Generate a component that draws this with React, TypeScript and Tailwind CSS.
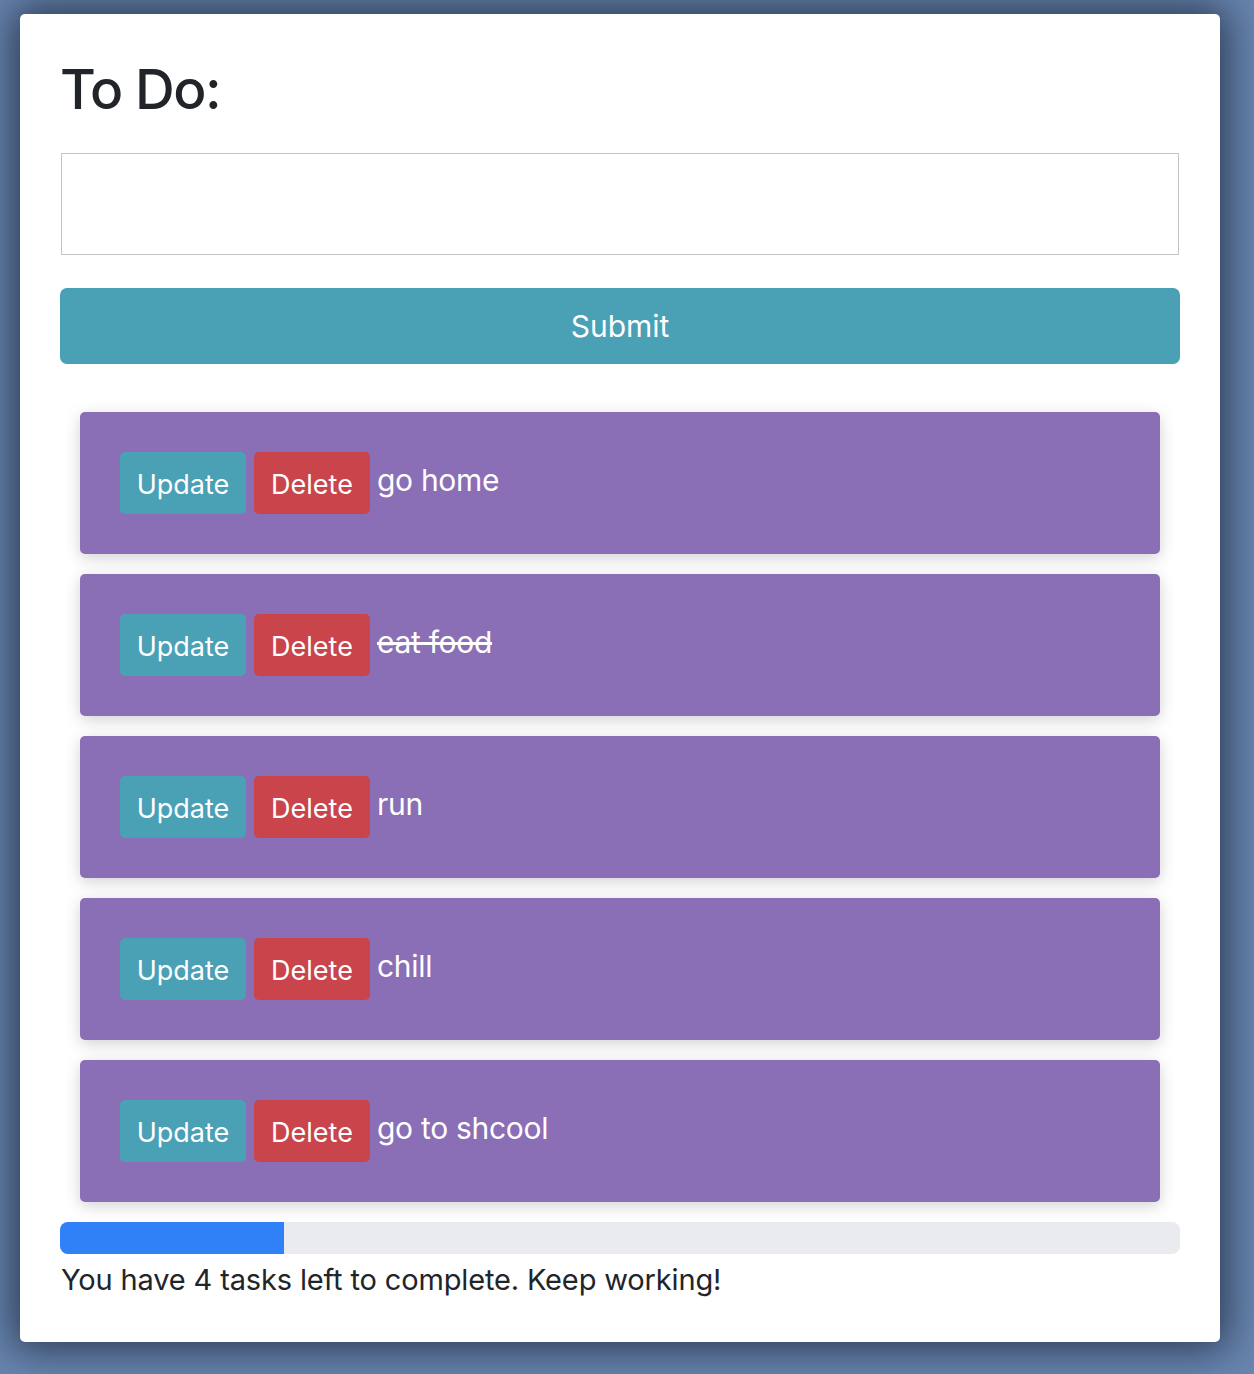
import React from "react";

const items = [
  { text: "go home", done: false },
  { text: "eat food", done: true },
  { text: "run", done: false },
  { text: "chill", done: false },
  { text: "go to shcool", done: false },
];

export default function App() {
  return (
    <div
      className="min-h-screen w-full bg-[#6886b0] pt-[14px] pb-[32px] px-[20px]"
      style={{ fontFamily: "Inter, 'Noto Sans', sans-serif" }}
    >
      <div className="w-[1200px] bg-white rounded-[5px] shadow-[0_0_40px_8px_rgba(25,35,55,0.75)] px-[40px] pt-[48px] pb-[42px] text-[#212529]">
        <h1 className="text-[55px] leading-none font-medium tracking-[-1.5px] ml-[0px]">To Do:</h1>
        <input
          className="mt-[36px] block w-[1118px] ml-[1px] h-[102px] border border-[#c4c4c4] outline-none"
          type="text"
        />
        <button className="mt-[33px] w-full h-[76px] rounded-[7px] bg-[#4aa0b5] text-white text-[30px] leading-none">
          Submit
        </button>
        <div className="mt-[48px] px-[20px] flex flex-col gap-[20px]">
          {items.map((it) => (
            <div
              key={it.text}
              className="bg-[#8a6eb6] rounded-[5px] p-[40px] shadow-[0_4px_16px_rgba(0,0,0,0.18)] flex items-start"
            >
              <button className="h-[62px] w-[126px] rounded-[5px] bg-[#4aa0b5] text-white text-[27px] leading-none pt-[2px]">
                Update
              </button>
              <button className="ml-[8px] h-[62px] w-[116px] rounded-[5px] bg-[#ca444b] text-white text-[27px] leading-none pt-[2px]">
                Delete
              </button>
              <span
                className={
                  "ml-[7px] mt-[8px] text-white text-[30px] leading-[40px] tracking-[-0.3px] " +
                  (it.done ? "line-through" : "")
                }
              >
                {it.text}
              </span>
            </div>
          ))}
        </div>
        <div className="mt-[20px] h-[32px] w-full rounded-[8px] bg-[#e9ebef] overflow-hidden flex">
          <div className="h-full bg-[#3080f8]" style={{ width: "20%" }} />
        </div>
        <p className="mt-[6px] text-[29px] leading-[40px] tracking-[-0.15px] ml-[1px]">
          You have 4 tasks left to complete. Keep working!
        </p>
      </div>
    </div>
  );
}
